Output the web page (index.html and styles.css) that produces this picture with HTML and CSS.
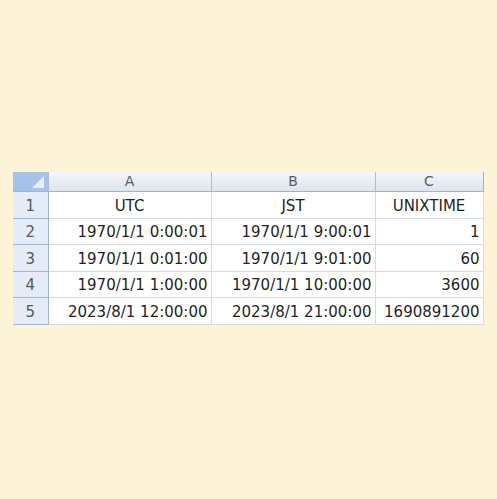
FILE: index.html
```html
<!DOCTYPE html>
<html lang="ja">
<head>
<meta charset="utf-8">
<link rel="stylesheet" href="styles.css">
</head>
<body>
<div class="sheet">
  <table class="grid">
    <colgroup>
      <col class="c-rh"><col class="c-a"><col class="c-b"><col class="c-c">
    </colgroup>
    <thead>
      <tr class="hdr">
        <th class="corner"><span class="tri"></span></th>
        <th>A</th><th>B</th><th class="last">C</th>
      </tr>
    </thead>
    <tbody>
      <tr><th class="rn">1</th><td class="ctr">UTC</td><td class="ctr">JST</td><td class="ctr">UNIXTIME</td></tr>
      <tr><th class="rn">2</th><td>1970/1/1 0:00:01</td><td>1970/1/1 9:00:01</td><td>1</td></tr>
      <tr><th class="rn">3</th><td>1970/1/1 0:01:00</td><td>1970/1/1 9:01:00</td><td>60</td></tr>
      <tr><th class="rn">4</th><td>1970/1/1 1:00:00</td><td>1970/1/1 10:00:00</td><td>3600</td></tr>
      <tr><th class="rn">5</th><td>2023/8/1 12:00:00</td><td>2023/8/1 21:00:00</td><td>1690891200</td></tr>
    </tbody>
  </table>
</div>
</body>
</html>
```
FILE: styles.css
```css
html, body {
  margin: 0;
  padding: 0;
  background: #fdf3d6;
}
body {
  min-height: 100vh;
}
.sheet {
  padding: 172px 0 0 13px;
}
.grid {
  border-collapse: collapse;
  table-layout: fixed;
  width: 470px;
  font-family: "DejaVu Sans", "Liberation Sans", sans-serif;
  background: #ffffff;
}
.c-rh { width: 35px; }
.c-a { width: 163px; }
.c-b { width: 164px; }
.c-c { width: 108px; }

.hdr th {
  height: 19px;
  padding: 0;
  font-weight: normal;
  font-size: 14px;
  color: #5a5a5a;
  background: linear-gradient(#f4f6fa, #dde4ee);
  border-left: 1px solid #a9bcd3;
  border-bottom: 1px solid #9eb6ce;
  text-align: center;
  vertical-align: middle;
  line-height: 19px;
}
.hdr th.last {
  border-right: 1px solid #f0a04a;
}
.hdr th.corner {
  background: #a6c2ea;
  border-left: none;
  position: relative;
}
.tri {
  position: absolute;
  right: 4px;
  bottom: 3px;
  width: 0;
  height: 0;
  border-left: 12px solid transparent;
  border-bottom: 12px solid #e7eef8;
}
tbody tr {
  height: 26.6px;
}
th.rn {
  padding: 0;
  font-weight: normal;
  font-size: 15px;
  color: #555a61;
  background: #e4ecf7;
  border-bottom: 1px solid #9eb6ce;
  border-right: 1px solid #9eb6ce;
  text-align: center;
  vertical-align: bottom;
  line-height: 24px;
}
td {
  padding: 0 3px 0 0;
  font-size: 15px;
  color: #1f1f1f;
  text-align: right;
  vertical-align: bottom;
  line-height: 24px;
  border-right: 1px solid #d6dce6;
  border-bottom: 1px solid #d6dce6;
  white-space: nowrap;
  overflow: hidden;
}
td.ctr {
  text-align: center;
  padding: 0;
}
```
